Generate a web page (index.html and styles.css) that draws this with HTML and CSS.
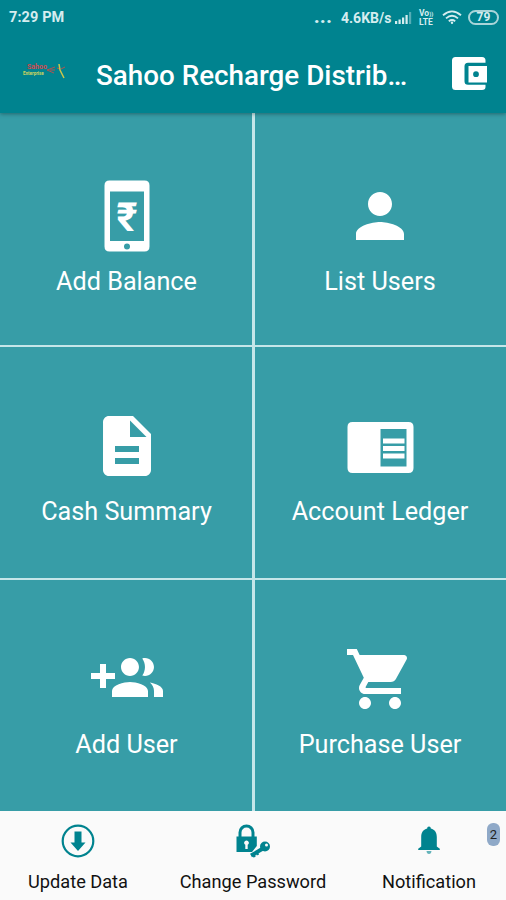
FILE: index.html
```html
<!DOCTYPE html>
<html lang="en">
<head>
    <meta charset="UTF-8">
    <title>Sahoo Recharge Distributor</title>
    <link rel="stylesheet" href="styles.css">
</head>
<body>
<div class="screen">
    <div class="header">
        <div class="status-bar">
            <span class="clock">7:29 PM</span>
            <div class="status-icons">
                <span class="dots">...</span>
                <span class="speed">4.6KB/s</span>
                <svg class="signal" width="17" height="12" viewBox="0 0 17 12">
                    <path d="M0 9h2.2v3H0zM3.5 7.5h2.2V12H3.5zM7 5.5h2.2V12H7zM10.5 3h2.2v9h-2.2z"/>
                    <path d="M14 0h2.2v12H14z" opacity=".4"/>
                </svg>
                <span class="volte"><span>Vo<small>))</small></span><span>LTE</span></span>
                <svg class="wifi" width="20" height="15" viewBox="0 0 20 15">
                    <path d="M1 5.3Q10-2.6 19 5.3M4 8.4Q10 3.2 16 8.4M6.8 11.3Q10 8.8 13.2 11.3"/>
                    <circle cx="10" cy="12.8" r="1.2"/>
                </svg>
                <span class="battery">79</span>
            </div>
        </div>
        <div class="app-bar">
            <div class="logo">
                <svg class="runner" width="20" height="18" viewBox="0 0 20 18">
                    <path d="M9 4L1 7l7 3M9 7H4M11 5l3 1M15 6l4-2" stroke="#b5524f"/>
                    <path d="M13 1l1 6 4 8" stroke="#c9c54b" stroke-width="1.5"/>
                </svg>
                <span class="logo-top">Sahoo</span>
                <span class="logo-bottom">Enterprise</span>
            </div>
            <span class="title">Sahoo Recharge Distrib…</span>
            <svg class="wallet" width="36" height="34" viewBox="0 0 36 34">
                <path d="M3.500 0H30q3.500 0 3.500 3.500v2.300H16q-3.500 0-3.500 3.500v15q0 3.500 3.500 3.500h17.500v2.200q0 3-3.500 3H3.500Q0 33 0 29.500v-26Q0 0 3.500 0z"/>
                <path fill-rule="evenodd" d="M16.500 9H35v16.500H16.500zM24 14.300a2.900 2.900 0 1 0 0 5.800 2.900 2.900 0 1 0 0-5.800z"/>
            </svg>
        </div>
    </div>
    <div class="menu">
        <div class="tile">
            <svg class="icon" viewBox="0 0 72 72">
                <path fill-rule="evenodd" d="M18.500 .5h35q5 0 5 5v61q0 5-5 5h-35q-5 0-5-5v-61q0-5 5-5zM19 11.500V61h34V11.500zM36 63.500a3 3 0 1 0 0 6 3 3 0 1 0 0-6z"/>
                <text x="36" y="51" class="rupee">₹</text>
            </svg>
            <span class="label">Add Balance</span>
        </div>
        <div class="tile">
            <svg class="icon" viewBox="0 0 24 24">
                <path d="M12 12c2.210 0 4-1.790 4-4s-1.790-4-4-4-4 1.790-4 4 1.790 4 4 4zm0 2c-2.670 0-8 1.340-8 4v2h16v-2c0-2.660-5.330-4-8-4z"/>
            </svg>
            <span class="label">List Users</span>
        </div>
        <div class="tile">
            <svg class="icon" viewBox="0 0 24 24">
                <path d="M14 2H6c-1.100 0-1.990.9-1.990 2L4 20c0 1.100.89 2 1.990 2H18c1.100 0 2-.9 2-2V8l-6-6zm2 16H8v-2h8v2zm0-4H8v-2h8v2zm-3-5V3.500L18.500 9H13z"/>
            </svg>
            <span class="label">Cash Summary</span>
        </div>
        <div class="tile">
            <svg class="icon" viewBox="0 0 72 72">
                <path fill-rule="evenodd" d="M8.500 12h56q5 0 5 5v41q0 5-5 5h-56q-5 0-5-5V17q0-5 5-5zM36.500 19v37.500h26V19z"/>
                <path d="M39 28.500h21.500v5H39zM39 36h21.500v5H39zM39 43.500h21.500v5H39z"/>
            </svg>
            <span class="label">Account Ledger</span>
        </div>
        <div class="tile">
            <svg class="icon" viewBox="0 0 24 24">
                <path d="M8 10H5V7H3v3H0v2h3v3h2v-3h3v-2zm10 1c1.660 0 2.990-1.340 2.990-3S19.660 5 18 5c-.32 0-.63.05-.91.14.57.81.9 1.790.9 2.860s-.34 2.040-.9 2.860c.28.09.59.14.91.14zm-5 0c1.660 0 2.990-1.340 2.990-3S14.660 5 13 5c-1.660 0-3 1.340-3 3s1.340 3 3 3zm6.620 2.160c.83.73 1.380 1.660 1.380 2.840v2h3v-2c0-1.540-2.370-2.490-4.380-2.840zM13 13c-2 0-6 1-6 3v2h12v-2c0-2-4-3-6-3z"/>
            </svg>
            <span class="label">Add User</span>
        </div>
        <div class="tile">
            <svg class="icon" viewBox="0 0 24 24">
                <path d="M7 18c-1.100 0-1.990.9-1.990 2S5.900 22 7 22s2-.9 2-2-.9-2-2-2zM1 2v2h2l3.600 7.590-1.350 2.450c-.16.28-.25.61-.25.96 0 1.100.9 2 2 2h12v-2H7.420c-.14 0-.25-.11-.25-.25l.03-.12.9-1.630h7.450c.75 0 1.410-.41 1.750-1.030l3.580-6.490c.08-.14.12-.31.12-.48 0-.55-.45-1-1-1H5.210l-.94-2H1zm16 16c-1.100 0-1.990.9-1.990 2s.89 2 1.990 2 2-.9 2-2-.9-2-2-2z"/>
            </svg>
            <span class="label">Purchase User</span>
        </div>
    </div>
    <div class="footer">
        <div class="footer-item">
            <svg class="footer-icon" viewBox="0 0 36 36">
                <circle cx="18" cy="18" r="15.300" fill="none" stroke="#00838f" stroke-width="2.200"/>
                <path d="M14.500 8.500h7v11h4L18 28l-7.500-8.500h4z"/>
            </svg>
            <span class="footer-label">Update Data</span>
        </div>
        <div class="footer-item">
            <svg class="footer-icon" viewBox="0 0 36 36">
                <path d="M5 14V9.500a6.500 6.500 0 0 1 13 0V14" fill="none" stroke="#00838f" stroke-width="3"/>
                <path fill-rule="evenodd" d="M1.500 13.500h20.300v9.500L17 29H1.500zM11.500 17.500a2.300 2.300 0 0 0-1.200 4.300V26h2.400v-4.200a2.300 2.300 0 0 0-1.200-4.300z"/>
                <path d="M16 32.500l12-7" fill="none" stroke="#00838f" stroke-width="3.800"/>
                <path d="M18 31l1.800 3M21.500 29l1.500 3" fill="none" stroke="#00838f" stroke-width="2.500"/>
                <path fill-rule="evenodd" d="M30 18.500a5 5 0 1 0 0 10 5 5 0 1 0 0-10zm1.500 2a1.500 1.500 0 1 1 0 3 1.500 1.500 0 1 1 0-3z"/>
            </svg>
            <span class="footer-label">Change Password</span>
        </div>
        <div class="footer-item">
            <svg class="footer-icon" viewBox="0 0 36 36">
                <path d="M18 3.500c1.200 0 1.800.8 1.800 2 4.200 1 6 4.300 6 8.500v9.500l3 2.200v1.300H7.200v-1.300l3-2.200V14c0-4.200 1.800-7.500 6-8.500 0-1.200.6-2 1.800-2z"/>
                <path d="M15.500 28h5q-.3 3-2.500 3t-2.500-3z" opacity=".6"/>
            </svg>
            <span class="footer-label">Notification</span>
            <span class="badge">2</span>
        </div>
    </div>
</div>
</body>
</html>
```
FILE: styles.css
```css
* {
    box-sizing: border-box;
}
body {
    margin: 0;
    font-family: Roboto, sans-serif;
    background-color: #fafafa;
}
svg {
    display: block;
    flex-shrink: 0;
}
.screen {
    width: 506px;
    height: 900px;
    display: flex;
    flex-direction: column;
    overflow: hidden;
}
.header {
    height: 113px;
    position: relative;
    z-index: 1;
    background-color: #00838f;
    color: #fff;
    box-shadow: 0 1px 4px rgba(0, 0, 0, 0.35);
}
.status-bar {
    height: 35px;
    padding: 0 7px 0 9px;
    display: flex;
    align-items: center;
    justify-content: space-between;
    color: #d5edef;
    fill: #d5edef;
    font-weight: bold;
}
.clock {
    font-size: 14.5px;
    letter-spacing: 0.1px;
}
.status-icons {
    display: flex;
    align-items: center;
}
.dots {
    margin: -3px 9px 0 0;
    font-size: 21px;
    line-height: 24px;
}
.speed {
    width: 50px;
    font-size: 14px;
    white-space: nowrap;
}
.signal {
    margin: 0 7px 0 4px;
}
.volte {
    width: 17px;
    margin-right: 6px;
    display: flex;
    flex-direction: column;
    font-size: 8.5px;
    line-height: 8px;
}
.volte small {
    font-size: 6px;
}
.wifi {
    margin-right: 6px;
}
.wifi path {
    fill: none;
    stroke: #d5edef;
    stroke-width: 1.8;
}
.battery {
    width: 31px;
    height: 15px;
    border: 2px solid #a9d5d9;
    border-radius: 8px;
    font-size: 12px;
    line-height: 11px;
    text-align: center;
}
.app-bar {
    height: 78px;
    padding: 0 18px 0 23px;
    display: flex;
    align-items: center;
}
.logo {
    width: 43px;
    height: 18px;
    margin: -4px 30px 0 0;
    position: relative;
    display: flex;
    flex-direction: column;
    font-weight: bold;
}
.logo-top {
    padding-left: 4px;
    font-size: 7px;
    line-height: 8px;
    color: #d04a50;
}
.logo-bottom {
    font-size: 4.5px;
    line-height: 5px;
    color: #d3d65c;
}
.runner {
    position: absolute;
    right: 0;
    top: 0;
    fill: none;
}
.title {
    flex: 1;
    padding-top: 2px;
    font-size: 27.8px;
    font-weight: 500;
    white-space: nowrap;
}
.wallet {
    fill: #fff;
    margin-top: 0;
}
.menu {
    height: 698px;
    display: grid;
    grid-template-columns: 252px 251px;
    grid-template-rows: 232px 231px 231px;
    column-gap: 3px;
    row-gap: 2px;
    background-color: #c5e6e9;
}
.tile {
    padding-top: 63px;
    display: flex;
    flex-direction: column;
    align-items: center;
    background-color: #379da7;
    color: #fff;
}
.tile:nth-child(odd) {
    padding-left: 1px;
}
.tile:nth-child(even) {
    padding-right: 1px;
}
.tile:nth-child(-n+2) {
    padding-top: 67px;
}
.icon {
    width: 72px;
    height: 72px;
    fill: #fff;
}
.rupee {
    font-size: 40px;
    font-weight: bold;
    text-anchor: middle;
}
.label {
    margin-top: 14px;
    font-size: 25.2px;
    line-height: 32px;
    white-space: nowrap;
}
.footer {
    height: 89px;
    display: grid;
    grid-template-columns: 156px 1fr 154px;
    background-color: #fafafa;
}
.footer-item {
    position: relative;
    padding-top: 12px;
    display: flex;
    flex-direction: column;
    align-items: center;
    color: #111;
}
.footer-item:nth-child(2) {
    padding-right: 2px;
}
.footer-icon {
    width: 36px;
    height: 36px;
    fill: #00838f;
}
.footer-label {
    margin-top: 11px;
    font-size: 18.2px;
    line-height: 24px;
    white-space: nowrap;
}
.badge {
    position: absolute;
    top: 12px;
    right: 6px;
    width: 13px;
    height: 23px;
    border-radius: 6px;
    background-color: #8fa9c8;
    color: #222;
    font-size: 13px;
    line-height: 23px;
    text-align: center;
}
```
